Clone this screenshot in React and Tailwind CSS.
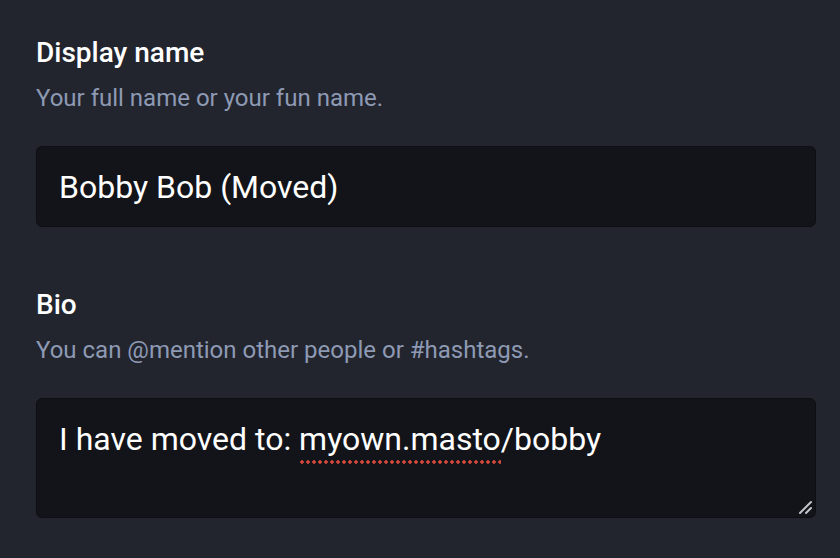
import React from 'react';

function Field({ label, hint, children }) {
  return (
    <div className="flex flex-col">
      <label className="text-[28px] font-medium leading-[32px] text-white">{label}</label>
      <p className="mt-[15px] text-[24px] leading-[28px] text-[#8e9ab4]">{hint}</p>
      {children}
    </div>
  );
}

export default function App() {
  return (
    <div
      className="w-[840px] h-[558px] overflow-hidden bg-[#22252e] pl-[36px] pr-[24px] pt-[37px]"
      style={{ fontFamily: 'Roboto, "Noto Sans", sans-serif' }}
    >
      <Field label="Display name" hint="Your full name or your fun name.">
        <div className="mt-[34px] h-[81px] rounded-[6px] border border-[#0e0f13] bg-[#131419] px-[22px] flex items-center">
          <span className="text-[32px] text-white">Bobby Bob (Moved)</span>
        </div>
      </Field>

      <div className="mt-[62px]">
        <Field label="Bio" hint="You can @mention other people or #hashtags.">
          <div className="relative mt-[34px] h-[120px] rounded-[6px] border border-[#0e0f13] bg-[#131419] px-[22px] pt-[20px]">
            <span className="text-[32px] leading-[40px] text-white">
              I have moved to:{' '}
              <span className="relative">
                myown.masto
                {/* spellcheck squiggle */}
                <span className="absolute left-0 right-0 bottom-[-6px] h-[4px] bg-[radial-gradient(circle,#d0483c_1.5px,transparent_2px)] bg-[length:6px_4px] bg-repeat-x" />
              </span>
              /bobby
            </span>
            <svg className="absolute right-[2px] bottom-[2px]" width="16" height="16" viewBox="0 0 16 16">
              <path d="M14 3 L3 14 M14 9 L9 14" stroke="#c2c5cc" strokeWidth="2" strokeLinecap="round" />
            </svg>
          </div>
        </Field>
      </div>
    </div>
  );
}
